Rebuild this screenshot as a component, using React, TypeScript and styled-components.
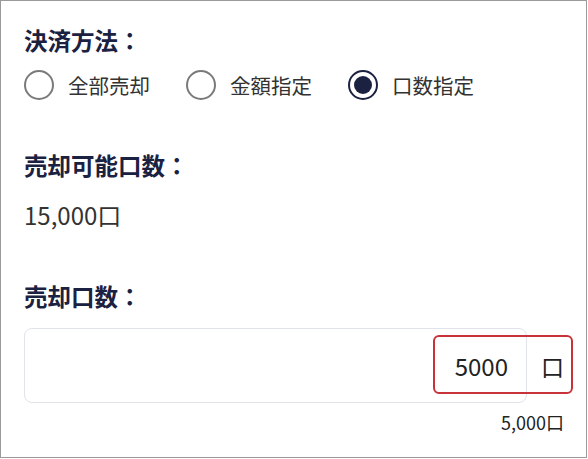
import React, { useState } from 'react';
import styled, { createGlobalStyle } from 'styled-components';

const GlobalStyle = createGlobalStyle`
  html, body {
    margin: 0;
    padding: 0;
    background: #ffffff;
  }
  body {
    font-family: "Noto Sans CJK JP", "Noto Sans", sans-serif;
  }
`;

const Frame = styled.div`
  box-sizing: border-box;
  width: 587px;
  height: 458px;
  border: 1px solid #9a9a9a;
  padding: 23px 22px 0 23px;
  background: #fff;
`;

const Section = styled.section<{ $gap?: number }>`
  margin-top: ${(p) => p.$gap ?? 0}px;
`;

const Heading = styled.h3`
  margin: 0;
  font-size: 23.5px;
  line-height: 33px;
  font-weight: 700;
  color: #1b2140;
`;

const RadioGroup = styled.div`
  display: flex;
  align-items: center;
  gap: 36px;
  margin-top: 10px;
  height: 36px;
`;

const RadioLabel = styled.label`
  display: flex;
  align-items: center;
  gap: 14px;
  font-size: 20.5px;
  color: #333;
  cursor: pointer;
`;

const HiddenInput = styled.input`
  position: absolute;
  opacity: 0;
  width: 0;
  height: 0;
`;

const RadioMark = styled.span<{ $checked: boolean }>`
  box-sizing: border-box;
  width: 30px;
  height: 30px;
  border-radius: 50%;
  border: 2px solid ${(p) => (p.$checked ? '#1b2140' : '#7a7a7a')};
  display: flex;
  align-items: center;
  justify-content: center;

  &::after {
    content: '';
    width: 18px;
    height: 18px;
    border-radius: 50%;
    background: #1b2140;
    display: ${(p) => (p.$checked ? 'block' : 'none')};
  }
`;

const Value = styled.p`
  margin: 16px 0 0;
  font-size: 24px;
  line-height: 33px;
  color: #333;
`;

const InputRow = styled.div`
  position: relative;
  display: flex;
  align-items: center;
  margin-top: 15px;
`;

const AmountInput = styled.input`
  box-sizing: border-box;
  width: 504px;
  height: 75px;
  border: 1px solid #e1e3ea;
  border-radius: 8px;
  padding: 0 18px;
  text-align: right;
  font-family: inherit;
  font-size: 24px;
  color: #222;
  outline: none;
  background: #fff;
`;

const Unit = styled.span`
  margin-left: 14px;
  font-size: 23px;
  color: #222;
`;

const Highlight = styled.div`
  position: absolute;
  left: 409px;
  top: 7px;
  width: 140px;
  height: 59px;
  box-sizing: border-box;
  border: 2px solid #c8333a;
  border-radius: 6px;
  pointer-events: none;
`;

const Note = styled.p`
  margin: 6px 0 0;
  text-align: right;
  font-size: 18px;
  line-height: 26px;
  color: #222;
`;

const options = ['全部売却', '金額指定', '口数指定'];

export default function App() {
  const [method, setMethod] = useState('口数指定');
  const [amount, setAmount] = useState('5000');

  const formatted = Number(amount || 0).toLocaleString('ja-JP');

  return (
    <>
      <GlobalStyle />
      <Frame>
        <Section>
          <Heading>決済方法：</Heading>
          <RadioGroup>
            {options.map((opt) => (
              <RadioLabel key={opt}>
                <HiddenInput
                  type="radio"
                  name="method"
                  checked={method === opt}
                  onChange={() => setMethod(opt)}
                />
                <RadioMark $checked={method === opt} />
                {opt}
              </RadioLabel>
            ))}
          </RadioGroup>
        </Section>
        <Section $gap={46}>
          <Heading>売却可能口数：</Heading>
          <Value>15,000口</Value>
        </Section>
        <Section $gap={49}>
          <Heading>売却口数：</Heading>
          <InputRow>
            <AmountInput value={amount} onChange={(e) => setAmount(e.target.value)} />
            <Unit>口</Unit>
            <Highlight />
          </InputRow>
          <Note>{formatted}口</Note>
        </Section>
      </Frame>
    </>
  );
}
